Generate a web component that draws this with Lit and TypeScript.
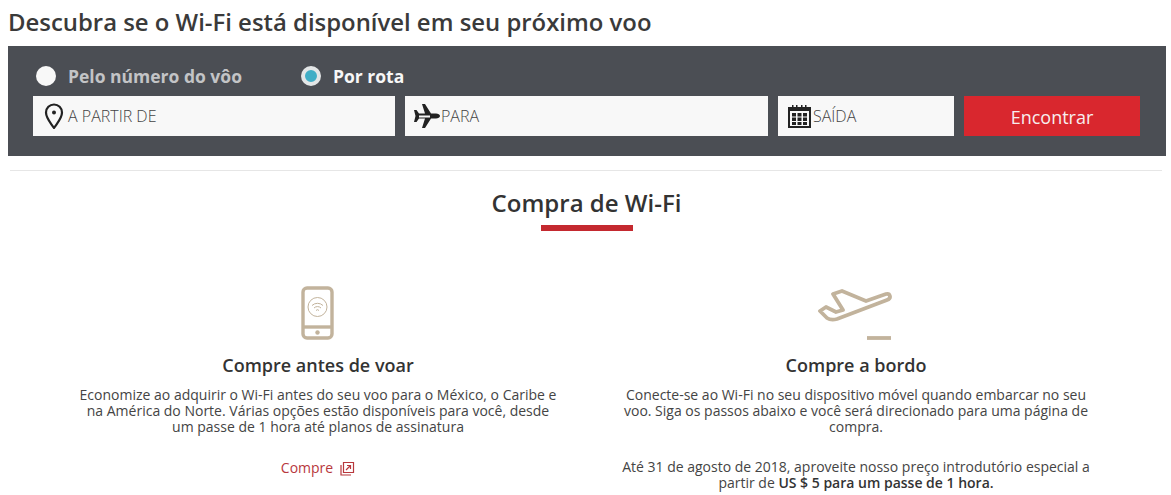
import { LitElement, html, css } from "lit";
import { customElement } from "lit/decorators.js";

@customElement("app-root")
export class AppRoot extends LitElement {
  static styles = css`
    :host {
      display: block;
      width: 1171px;
      height: 495px;
      overflow: hidden;
      background: #fff;
      font-family: "Open Sans", "Liberation Sans", sans-serif;
      color: #333;
    }
    .page {
      padding: 0 5px 0 8px;
    }
    h1 {
      margin: 0;
      padding-top: 7px;
      height: 46px;
      box-sizing: border-box;
      font-size: 23.9px;
      line-height: 30px;
      font-weight: 600;
      color: #3a3a3a;
    }
    .panel {
      height: 110px;
      box-sizing: border-box;
      background: #4b4e54;
      padding: 12px 26px 0 25px;
    }
    .radios {
      display: flex;
      height: 36px;
      margin-bottom: 2px;
      align-items: center;
      font-size: 17.5px;
      font-weight: 700;
    }
    .radio {
      display: flex;
      align-items: center;
      gap: 12px;
    }
    .radio.off {
      color: #c3c4c6;
      width: 268px;
      padding-left: 3px;
      box-sizing: border-box;
    }
    .radio.on {
      color: #f7f7f7;
    }
    .dot {
      width: 20px;
      height: 20px;
      border-radius: 50%;
      background: #f8f8f8;
      box-sizing: border-box;
    }
    .on .dot {
      border: 4px solid #e3e6e7;
      background: #41aec6;
    }
    .fields {
      display: flex;
      gap: 10px;
    }
    .field {
      height: 40px;
      background: #f8f8f8;
      display: flex;
      align-items: center;
      font-size: 16px;
      font-weight: 300;
      color: #444;
    }
    .from {
      width: 362px;
      padding-left: 11px;
      box-sizing: border-box;
      gap: 4px;
    }
    .to {
      width: 363px;
      padding-left: 8px;
      box-sizing: border-box;
    }
    .date {
      width: 176px;
      padding-left: 10px;
      box-sizing: border-box;
      gap: 2px;
    }
    .find {
      width: 176px;
      height: 40px;
      border: 0;
      padding: 2px 0 0;
      background: #d9272e;
      color: #f7eeee;
      font: 400 18px "Open Sans", "Liberation Sans", sans-serif;
    }
    .rule {
      height: 1px;
      background: #e6e6e6;
      margin: 14px 4px 0 2px;
    }
    .title {
      text-align: center;
      margin-right: 1px;
    }
    h2 {
      margin: 15px 0 0;
      font-size: 24px;
      line-height: 33px;
      font-weight: 600;
      color: #333;
    }
    .bar {
      width: 92px;
      height: 6px;
      margin: 6px auto 0;
      background: #c4292f;
    }
    .cols {
      display: grid;
      grid-template-columns: 480px 480px;
      gap: 58px;
      padding: 55px 0 0 70px;
    }
    .col {
      text-align: center;
      font-size: 14px;
      line-height: 16px;
      color: #444;
    }
    .icon {
      height: 54px;
      display: flex;
      justify-content: center;
    }
    h3 {
      margin: 14px 0 10px;
      font-size: 18px;
      line-height: 23px;
      font-weight: 600;
      color: #333;
    }
    p {
      margin: 0;
    }
    .offer {
      margin-top: 24px;
    }
    .buy {
      margin-top: 17px;
      display: flex;
      justify-content: center;
      align-items: center;
      gap: 7px;
      color: #b8383d;
      height: 32px;
    }
    b {
      font-weight: 600;
      color: #333;
    }
  `;

  render() {
    return html`
      <div class="page">
        <h1>Descubra se o Wi-Fi está disponível em seu próximo voo</h1>
        <div class="panel">
          <div class="radios">
            <div class="radio off"><span class="dot"></span>Pelo número do vôo</div>
            <div class="radio on"><span class="dot"></span>Por rota</div>
          </div>
          <div class="fields">
            <div class="field from">
              <svg width="20" height="26" viewBox="0 0 20 26" fill="none" stroke="#222" stroke-width="2.200">
                <path d="M10 25C6 19 2 15 2 9.500a8 8 0 0 1 16 0C18 15 14 19 10 25Z" />
                <circle cx="10" cy="9.500" r="2" fill="#222" stroke="none" />
              </svg>
              A PARTIR DE
            </div>
            <div class="field to">
              <svg width="28" height="26" viewBox="0 0 28 26" fill="#222">
                <path d="M27 13c0-1.500-2-2.500-4-2.500h-5L12 1H9l3 9.500H6L3.500 7H1l1.500 6L1 19h2.500L6 15.500h6L9 25h3l6-9.500h5c2 0 4-1 4-2.500Z" />
                <path d="M6 12.500h11v2H6z" fill="#f8f8f8" />
              </svg>
              PARA
            </div>
            <div class="field date">
              <svg width="23" height="23" viewBox="0 0 23 23" fill="#222">
                <path d="M4 0h1.500v3H4zM8 0h1.500v3H8zM13 0h1.500v3H13zM17 0h1.500v3H17z" />
                <path fill-rule="evenodd" d="M0 2h23v21H0ZM2 6v15h19V6Z" />
                <path d="M4 8h4v3.500H4zM9.500 8h4v3.500h-4zM15 8h4v3.500h-4zM4 12.500h4V16H4zM9.500 12.500h4V16h-4zM15 12.500h4V16h-4zM4 17h4v3H4zM9.500 17h4v3h-4zM15 17h4v3h-4z" />
              </svg>
              SAÍDA
            </div>
            <button class="find">Encontrar</button>
          </div>
        </div>
        <div class="rule"></div>
        <div class="title">
          <h2>Compra de Wi-Fi</h2>
          <div class="bar"></div>
        </div>
        <div class="cols">
          <div class="col">
            <div class="icon">
              <svg width="36" height="54" viewBox="0 0 36 54" fill="none" stroke="#c2b39c" stroke-width="3.400">
                <rect x="3" y="2" width="29" height="50" rx="4" />
                <path d="M3 41h29" />
                <circle cx="17.500" cy="46.500" r="2.200" fill="#c2b39c" stroke="none" />
                <circle cx="17.500" cy="21" r="9.500" stroke-width="1" />
                <path d="M12 19.500a8 8 0 0 1 11 0M14 22a5 5 0 0 1 7 0M16 24.500a2 2 0 0 1 3 0" stroke-width="1" />
              </svg>
            </div>
            <h3>Compre antes de voar</h3>
            <p>
              Economize ao adquirir o Wi-Fi antes do seu voo para o México, o Caribe e<br />
              na América do Norte. Várias opções estão disponíveis para você, desde<br />
              um passe de 1 hora até planos de assinatura
            </p>
            <div class="buy">
              Compre
              <svg width="15" height="15" viewBox="0 0 15 15" fill="none" stroke="#b8383d" stroke-width="1.200">
                <path d="M1 4v10h10M3.500 1.500h10v10h-10Z" />
                <path d="M6 9l4-4M7 4.500h3.500V8" />
              </svg>
            </div>
          </div>
          <div class="col">
            <div class="icon">
              <svg width="76" height="54" viewBox="0 0 76 54" fill="none" stroke="#c2b39c" stroke-width="3.800" stroke-linejoin="round">
                <path d="M2 25l6-4 10 5 7-2L15 8l9-3 24 10 20-7c4-1 6 4 1 6L19 33c-4 1-7 1-10-1Z" />
                <path d="M49 52h24" />
              </svg>
            </div>
            <h3>Compre a bordo</h3>
            <p>
              Conecte-se ao Wi-Fi no seu dispositivo móvel quando embarcar no seu<br />
              voo. Siga os passos abaixo e você será direcionado para uma página de<br />
              compra.
            </p>
            <p class="offer">
              Até 31 de agosto de 2018, aproveite nosso preço introdutório especial a<br />
              partir de <b>US $ 5 para um passe de 1 hora.</b>
            </p>
          </div>
        </div>
      </div>
    `;
  }
}
